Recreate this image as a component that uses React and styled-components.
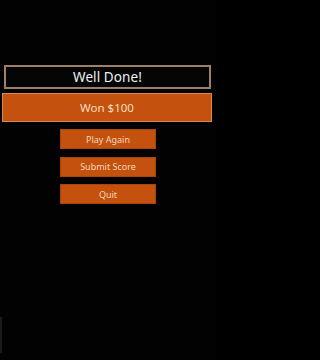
import React from "react";
import styled, { createGlobalStyle } from "styled-components";

const Global = createGlobalStyle`
  html, body { margin: 0; padding: 0; background: #000; }
  body { font-family: "Noto Sans", "Open Sans", sans-serif; }
  #root { min-height: 100vh; }
`;

const Screen = styled.div`
  position: relative;
  width: 216px;
  height: 360px;
  background: #020202;
  display: flex;
  flex-direction: column;
  align-items: stretch;
  padding-top: 65px;
  box-sizing: border-box;
  overflow: hidden;
`;

const TitleBox = styled.div`
  margin: 0 5px 0 4px;
  height: 24px;
  box-sizing: border-box;
  border: 2px solid #9c8068;
  background: #050505;
  color: #eef0f2;
  font-size: 13.5px;
  display: flex;
  align-items: center;
  justify-content: center;
  letter-spacing: 0.1px;
`;

const PrizeBox = styled.div`
  margin: 4px 4px 0 2px;
  height: 29px;
  box-sizing: border-box;
  border: 1px solid #d98a52;
  background: #c4520e;
  color: #f6dcc0;
  font-size: 11.5px;
  display: flex;
  align-items: center;
  justify-content: center;
`;

const Buttons = styled.div`
  margin-top: 7px;
  display: flex;
  flex-direction: column;
  align-items: center;
  gap: 7.5px;
`;

const Button = styled.button`
  width: 96px;
  height: 20px;
  box-sizing: border-box;
  border: 1px solid #a8440c;
  background: #c4520e;
  color: #f2d6bc;
  font-family: "Noto Sans", "Open Sans", sans-serif;
  font-size: 9px;
  padding: 0;
  display: flex;
  align-items: center;
  justify-content: center;
  cursor: pointer;
`;

const EdgeBar = styled.div`
  position: absolute;
  left: 0;
  top: 317px;
  width: 2px;
  height: 36px;
  background: #1c1c1c;
`;

export default function App() {
  return (
    <>
      <Global />
      <Screen>
        <TitleBox>Well Done!</TitleBox>
        <PrizeBox>Won $100</PrizeBox>
        <Buttons>
          <Button>Play Again</Button>
          <Button>Submit Score</Button>
          <Button>Quit</Button>
        </Buttons>
        <EdgeBar />
      </Screen>
    </>
  );
}
